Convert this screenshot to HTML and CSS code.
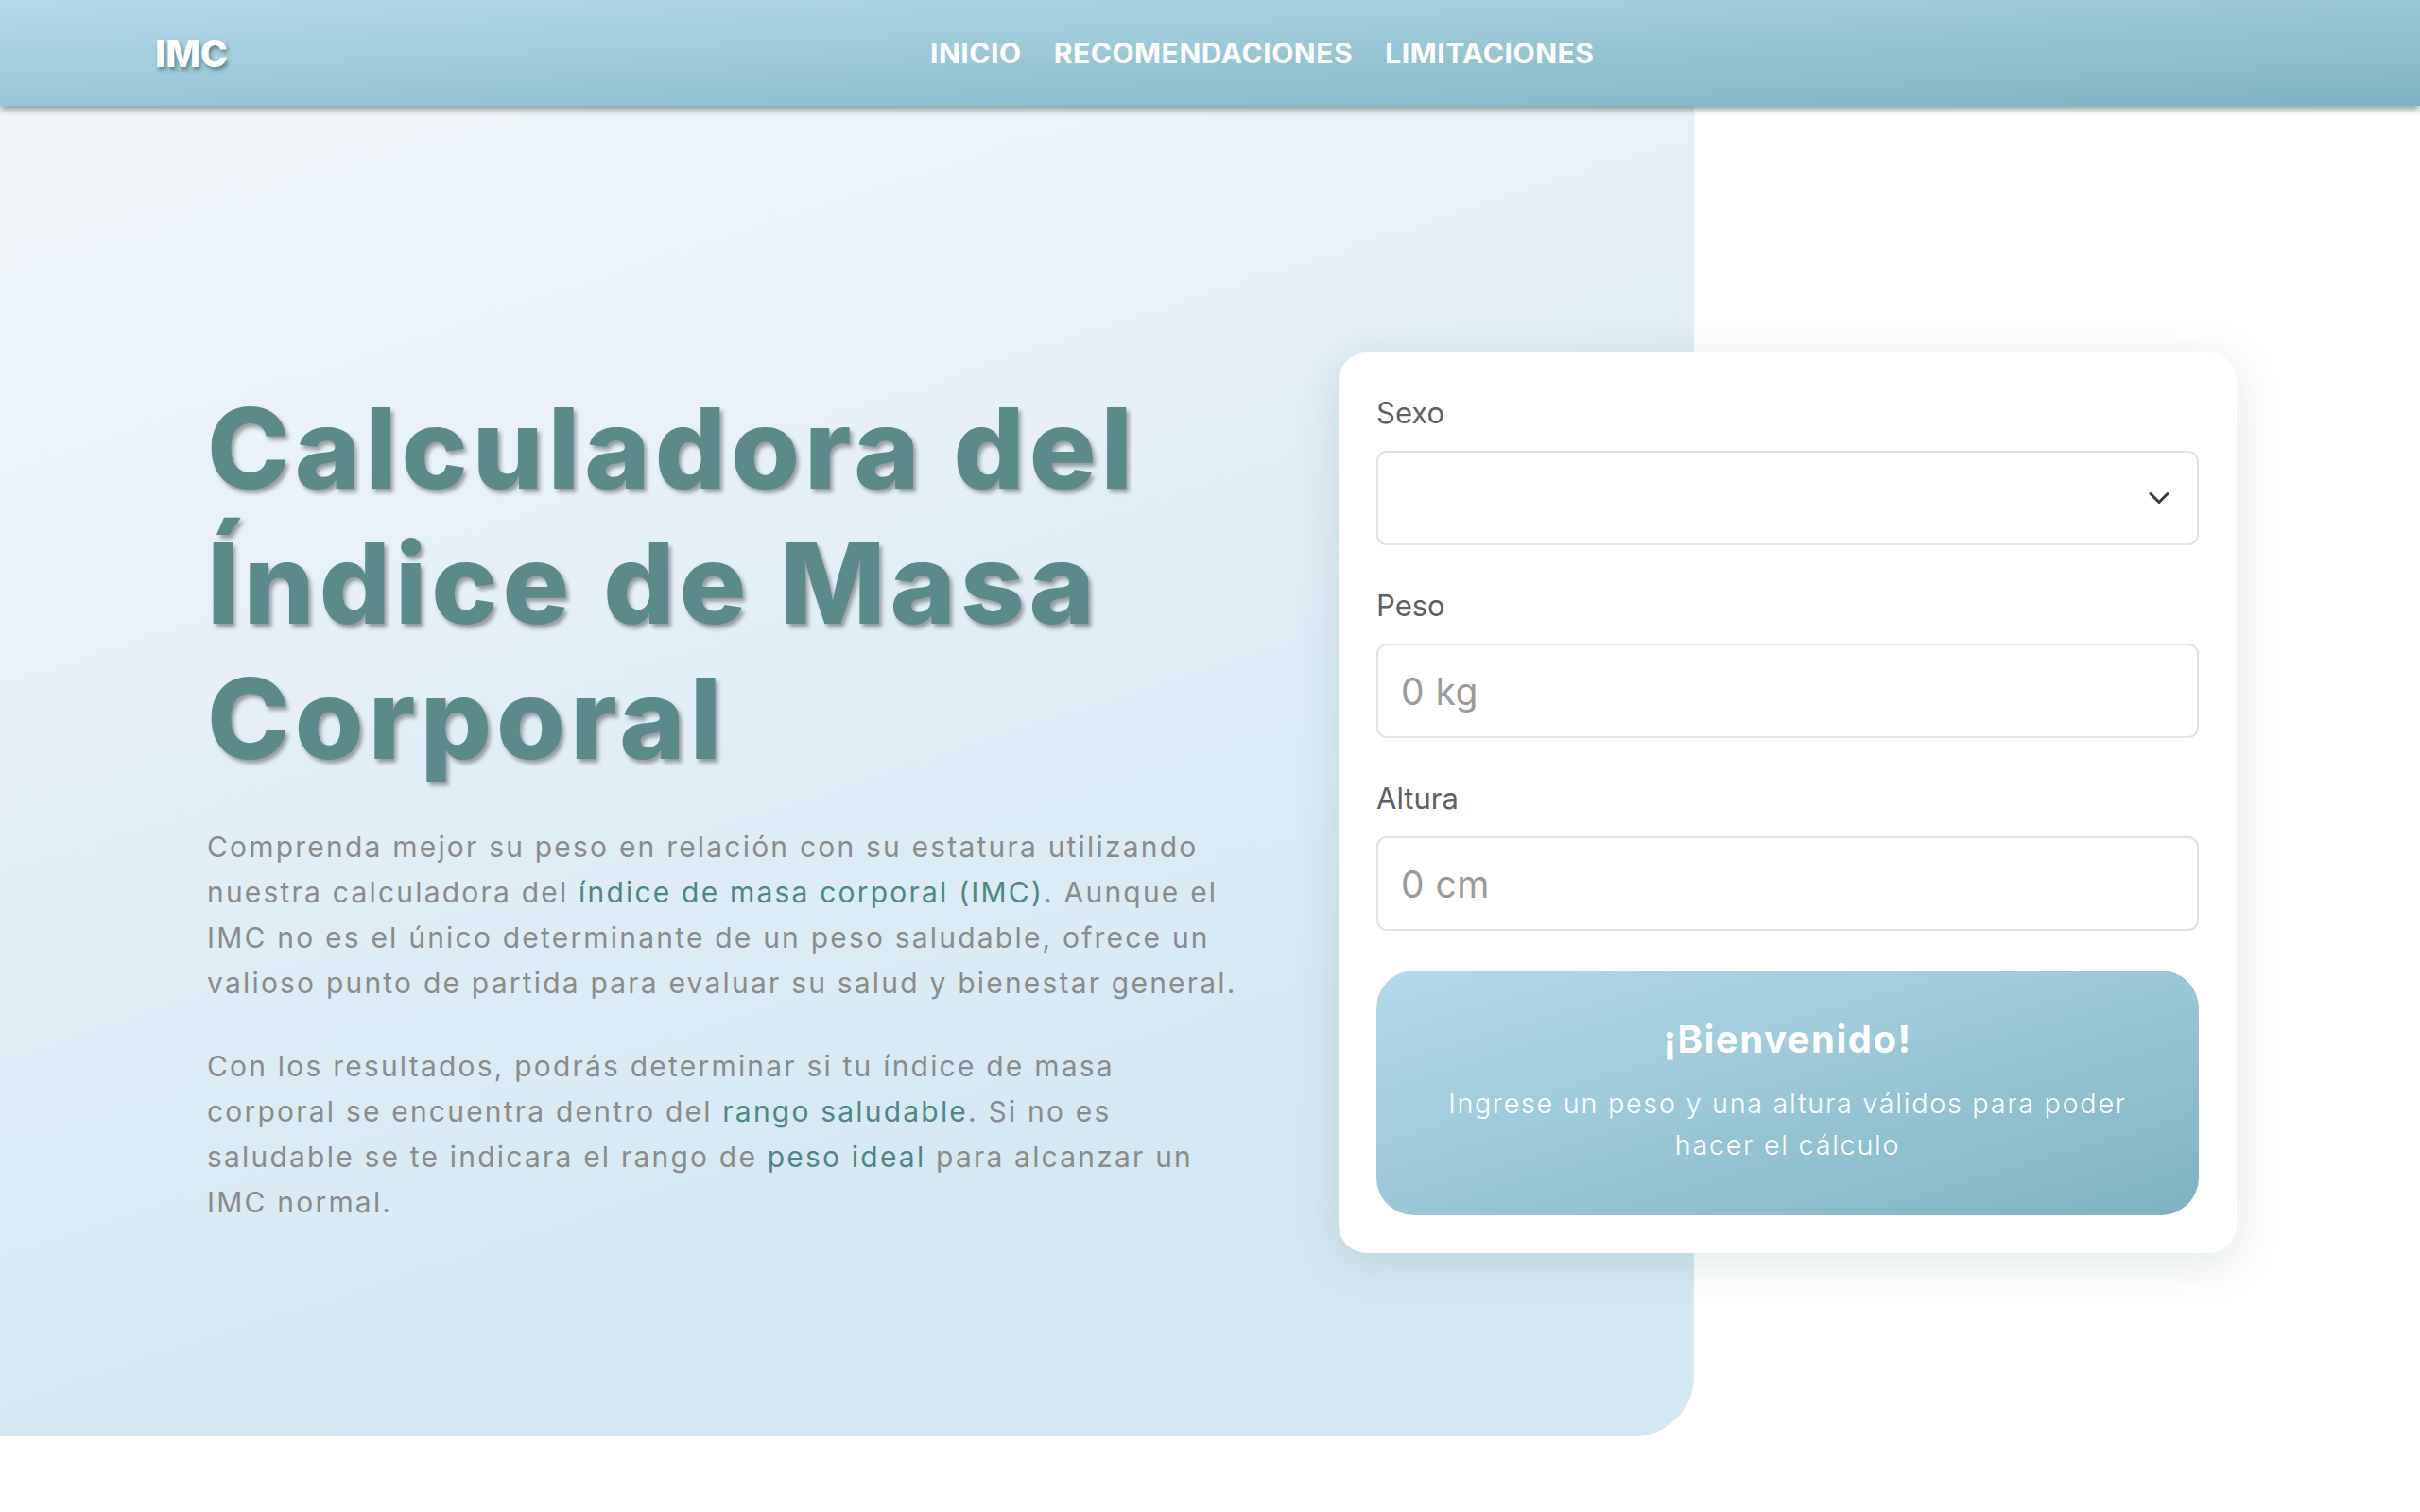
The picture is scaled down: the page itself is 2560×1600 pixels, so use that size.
FILE: index.html
```html
<!DOCTYPE html>
<html lang="es">
<head>
<meta charset="utf-8">
<title>Calculadora IMC</title>
<link rel="stylesheet" href="styles.css">
</head>
<body>
<header class="topbar">
  <a class="logo" href="#">IMC</a>
  <nav class="nav">
    <a href="#">INICIO</a>
    <a href="#">RECOMENDACIONES</a>
    <a href="#">LIMITACIONES</a>
  </nav>
</header>
<main class="hero">
  <div class="hero-row">
    <section class="intro">
      <h1 class="title">Calculadora del<br>Índice de Masa<br>Corporal</h1>
      <p class="lead">Comprenda mejor su peso en relación con su estatura utilizando<br>nuestra calculadora del <span class="hl">índice de masa corporal (IMC)</span>. Aunque el<br>IMC no es el único determinante de un peso saludable, ofrece un<br>valioso punto de partida para evaluar su salud y bienestar general.</p>
      <p class="lead">Con los resultados, podrás determinar si tu índice de masa<br>corporal se encuentra dentro del <span class="hl">rango saludable</span>. Si no es<br>saludable se te indicara el rango de <span class="hl">peso ideal</span> para alcanzar un<br>IMC normal.</p>
    </section>
    <form class="card">
      <div class="field">
        <label class="label">Sexo</label>
        <div class="control select">
          <svg width="24" height="24" viewBox="0 0 16 16"><path d="M2 5l6 6 6-6" fill="none" stroke="#343a40" stroke-width="2" stroke-linecap="round" stroke-linejoin="round"/></svg>
        </div>
      </div>
      <div class="field">
        <label class="label">Peso</label>
        <input class="control input" type="text" placeholder="0 kg">
      </div>
      <div class="field">
        <label class="label">Altura</label>
        <input class="control input" type="text" placeholder="0 cm">
      </div>
      <div class="result">
        <h2 class="result-title">¡Bienvenido!</h2>
        <p class="result-text">Ingrese un peso y una altura válidos para poder<br>hacer el cálculo</p>
      </div>
    </form>
  </div>
</main>
</body>
</html>
```
FILE: styles.css
```css
* { box-sizing: border-box; }

body {
  margin: 0;
  background: #ffffff;
  font-family: Inter, "Noto Sans", "DejaVu Sans", sans-serif;
  overflow: hidden;
}

.topbar {
  position: relative;
  z-index: 2;
  height: 112px;
  display: flex;
  align-items: center;
  padding-left: 164px;
  background: linear-gradient(to bottom right, #b5daea 0%, #7fb3c1 100%);
  box-shadow: 0 4px 7px rgba(0, 0, 0, 0.38);
}

.logo {
  color: #ffffff;
  font-size: 39px;
  font-weight: 800;
  text-decoration: none;
  letter-spacing: 0;
  text-shadow: 2px 3px 4px rgba(30, 70, 80, 0.55);
}

.nav {
  display: flex;
  gap: 34px;
  margin-left: 743px;
}

.nav a {
  color: #ffffff;
  font-size: 30px;
  font-weight: 700;
  text-decoration: none;
  letter-spacing: 0.55px;
}

.hero {
  width: 1792px;
  height: 1408px;
  border-bottom-right-radius: 64px;
  background: linear-gradient(162deg, #f1f6fa 0%, #e3eff6 40%, #d3e8f2 78%, #d3e8f2 100%);
}

.hero-row {
  width: 2560px;
  height: 100%;
  display: flex;
  align-items: center;
  gap: 87px;
  padding: 67px 0 0 219px;
}

.intro {
  width: 1110px;
  flex: none;
}

.title {
  margin: 0 0 40px;
  color: #5b8a88;
  font-size: 118px;
  font-weight: 800;
  line-height: 143px;
  letter-spacing: 5px;
  text-shadow: 3px 4px 4px rgba(0, 0, 0, 0.35);
}

.lead {
  margin: 0 0 40px;
  color: #8b8b8b;
  font-size: 30px;
  line-height: 48px;
  letter-spacing: 2.2px;
  white-space: nowrap;
}

.lead:last-child { margin-bottom: 0; }

.hl { color: #4e8783; }

.card {
  width: 950px;
  flex: none;
  background: #ffffff;
  border-radius: 30px;
  padding: 40px;
  box-shadow: 0 10px 50px rgba(30, 70, 80, 0.14);
}

.field { margin-bottom: 40px; }
.field:nth-child(3) { margin-bottom: 42px; }

.label {
  display: block;
  margin-bottom: 16px;
  color: #5f5f5f;
  font-size: 31px;
  line-height: 48px;
}

.control {
  display: block;
  width: 100%;
  height: 100px;
  border: 2px solid #dfe2e7;
  border-radius: 11px;
  background: #ffffff;
}

.select {
  display: flex;
  align-items: center;
  justify-content: flex-end;
  padding-right: 28px;
}

.input {
  padding: 0 24px;
  font-family: inherit;
  font-size: 39px;
  color: #555555;
  outline: none;
  letter-spacing: 0.5px;
}

.input::placeholder { color: #9a9a9a; }

.result {
  border-radius: 40px;
  padding: 43px 40px 53px;
  text-align: center;
  color: #ffffff;
  background: linear-gradient(to bottom right, #b5daea 0%, #7fb3c1 100%);
}

.result-title {
  margin: 0 0 16px;
  font-size: 40px;
  line-height: 60px;
  font-weight: 700;
  letter-spacing: 1.5px;
}

.result-text {
  margin: 0;
  font-size: 28.8px;
  line-height: 43.2px;
  font-weight: 300;
  letter-spacing: 1.7px;
}
```
